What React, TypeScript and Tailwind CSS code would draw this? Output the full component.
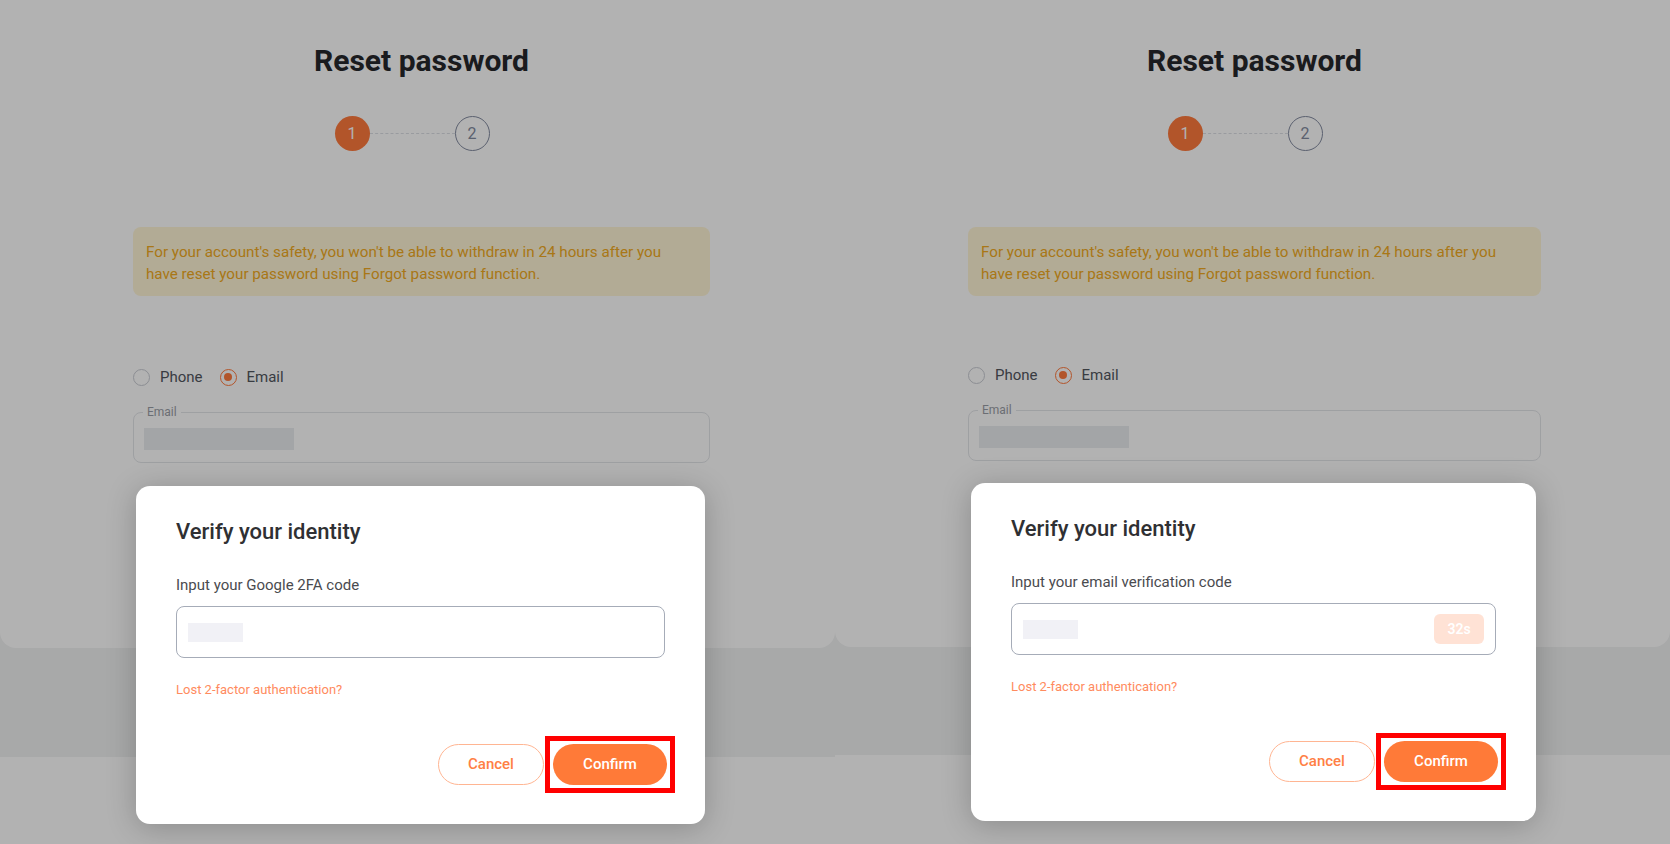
import React from "react";

type Variant = "2fa" | "email";

function Stepper() {
  return (
    <div className="mt-[37px] flex items-center justify-center pr-[19px]">
      <div className="flex h-[35px] w-[35px] items-center justify-center rounded-full bg-[#ff7a3d] text-[16px] leading-none text-white">
        1
      </div>
      <div className="h-0 w-[85px] border-t border-dashed border-[#dcdfe4]" />
      <div className="flex h-[35px] w-[35px] items-center justify-center rounded-full border-[1.5px] border-[#838ba0] text-[16px] leading-none text-[#838ba0]">
        2
      </div>
    </div>
  );
}

function Radio({ checked, label }: { checked: boolean; label: string }) {
  return (
    <div className="flex items-center gap-[10px]">
      {checked ? (
        <span className="flex h-[17px] w-[17px] items-center justify-center rounded-full border-[1.5px] border-[#ff7a3d]">
          <span className="h-[8px] w-[8px] rounded-full bg-[#ff7a3d]" />
        </span>
      ) : (
        <span className="h-[17px] w-[17px] rounded-full border-[1.5px] border-[#c9ccd3]" />
      )}
      <span className="text-[15px] leading-[20px] text-[#52565e]">{label}</span>
    </div>
  );
}

function Card({ variant }: { variant: Variant }) {
  const left = variant === "2fa";
  return (
    <div
      className={
        left
          ? "flex h-[648px] flex-col rounded-b-[16px] bg-white pl-[133px] pt-[43px]"
          : "flex h-[647px] flex-col rounded-b-[16px] bg-white pl-[133px] pt-[43px]"
      }
    >
      <div className={left ? "flex w-[577px] flex-col" : "flex w-[573px] flex-col"}>
        <h1 className="text-center text-[30px] font-bold leading-[36px] text-[#26272b]">
          Reset password
        </h1>
        <Stepper />
        <div className="mt-[76px] rounded-[8px] bg-[#fff5d6] px-[13px] pb-[11px] pt-[14px] text-[15.2px] leading-[22px] text-[#f2ab22]">
          For your account's safety, you won't be able to withdraw in 24 hours after you
          <br />
          have reset your password using Forgot password function.
        </div>
        <div
          className={
            left
              ? "mt-[71px] flex items-center gap-[17px]"
              : "mt-[69px] flex items-center gap-[17px]"
          }
        >
          <Radio checked={false} label="Phone" />
          <Radio checked={true} label="Email" />
        </div>
        <div className="relative mt-[25px] h-[51px] rounded-[8px] border border-[#e3e5e9]">
          <span className="absolute left-[9px] top-[-9px] bg-white px-[4px] text-[12px] leading-[16px] text-[#9a9ea6]">
            Email
          </span>
          <div className="ml-[10px] mt-[15px] h-[22px] w-[150px] bg-[#eaecf0]" />
        </div>
      </div>
    </div>
  );
}

function Modal({ variant }: { variant: Variant }) {
  const left = variant === "2fa";
  return (
    <div
      className={
        left
          ? "absolute left-[136px] top-[486px] w-[569px] rounded-[14px] bg-white px-[40px] pb-[39px] pt-[32px] shadow-[0_4px_30px_rgba(0,0,0,0.22)]"
          : "absolute left-[136px] top-[483px] w-[565px] rounded-[14px] bg-white px-[40px] pb-[39px] pt-[32px] shadow-[0_4px_30px_rgba(0,0,0,0.22)]"
      }
    >
      <h2 className="text-[22px] font-medium leading-[28px] text-[#2f3033]">Verify your identity</h2>
      <p className="mt-[29px] text-[15px] leading-[20px] text-[#4a4b4f]">
        {left ? "Input your Google 2FA code" : "Input your email verification code"}
      </p>
      <div className="mt-[11px] flex h-[52px] items-center rounded-[8px] border-[1.5px] border-[#a6acb8] pl-[11px] pr-[11px]">
        <div className="h-[19px] w-[55px] bg-[#f1f1f6]" />
        {!left && (
          <div className="ml-auto flex h-[30px] w-[50px] items-center justify-center rounded-[6px] bg-[#ffe2d5] text-[14px] font-semibold text-white">
            32s
          </div>
        )}
      </div>
      <p className="mt-[24px] text-[13px] leading-[16px] text-[#ff8b5e]">Lost 2-factor authentication?</p>
      <div className="-mr-[2px] mt-[46px] flex justify-end gap-[9px]">
        <button className="h-[41px] w-[106px] rounded-full border-[1.5px] border-[#ffb592] bg-white text-[15px] font-medium text-[#ff7f45]">
          Cancel
        </button>
        <div className="relative">
          <button className="h-[41px] w-[114px] rounded-full bg-[#ff7a38] text-[15px] font-medium text-white">
            Confirm
          </button>
          <div className="pointer-events-none absolute -inset-[8px] border-[5px] border-[#ff0000]" />
        </div>
      </div>
    </div>
  );
}

function Screen({ variant }: { variant: Variant }) {
  const left = variant === "2fa";
  return (
    <div className="relative h-[844px] w-[835px] shrink-0 bg-white">
      <div className={left ? "h-[757px] bg-[#f1f2f3]" : "h-[755px] bg-[#f1f2f3]"}>
        <Card variant={variant} />
      </div>
      <div className="absolute inset-0 bg-black/30" />
      <Modal variant={variant} />
    </div>
  );
}

export default function App() {
  return (
    <div className="flex h-[844px] w-[1670px] overflow-hidden font-['Roboto',sans-serif]">
      <Screen variant="2fa" />
      <Screen variant="email" />
    </div>
  );
}
